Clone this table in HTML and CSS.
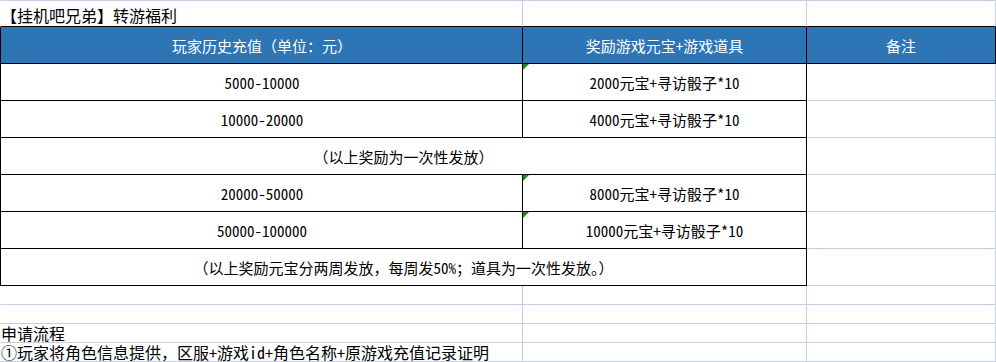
FILE: index.html
```html
<!DOCTYPE html>
<html lang="zh-CN">
<head>
<meta charset="utf-8">
<title>转游福利</title>
<link rel="stylesheet" href="styles.css">
</head>
<body>
<div class="sheet">
  <div class="c a r1 title">【挂机吧兄弟】转游福利</div>
  <div class="c b r1"></div>
  <div class="c cc r1"></div>

  <div class="c a t hd">玩家历史充值（单位：元）</div>
  <div class="c b t hd">奖励游戏元宝+游戏道具</div>
  <div class="c cc hd hdc">备注</div>

  <div class="c a t mid">5000-10000</div>
  <div class="c b t mid flag">2000元宝+寻访骰子*10</div>
  <div class="c cc"></div>

  <div class="c a t mid">10000-20000</div>
  <div class="c b t mid">4000元宝+寻访骰子*10</div>
  <div class="c cc"></div>

  <div class="c ab t mid">（以上奖励为一次性发放）</div>
  <div class="c cc"></div>

  <div class="c a t mid">20000-50000</div>
  <div class="c b t mid flag">8000元宝+寻访骰子*10</div>
  <div class="c cc"></div>

  <div class="c a t mid">50000-100000</div>
  <div class="c b t mid flag">10000元宝+寻访骰子*10</div>
  <div class="c cc"></div>

  <div class="c ab t mid">（以上奖励元宝分两周发放，每周发50%；道具为一次性发放。）</div>
  <div class="c cc"></div>

  <div class="c a"></div>
  <div class="c b"></div>
  <div class="c cc"></div>

  <div class="c a"></div>
  <div class="c b"></div>
  <div class="c cc"></div>

  <div class="c a low">申请流程</div>
  <div class="c b"></div>
  <div class="c cc"></div>

  <div class="c a low"><span class="num">①</span>玩家将角色信息提供，区服+游戏id+角色名称+原游戏充值记录证明</div>
  <div class="c b"></div>
  <div class="c cc"></div>
</div>
</body>
</html>
```
FILE: styles.css
```css
html, body {
  margin: 0;
  padding: 0;
  background: #ffffff;
}

body {
  font-family: "Noto Sans Mono CJK SC", "Noto Sans CJK SC", monospace;
  font-size: 15px;
  color: #000000;
  width: 996px;
  height: 362px;
  overflow: hidden;
}

.sheet {
  display: grid;
  grid-template-columns: 523px 284px 189px;
  grid-template-rows: 27px repeat(7, 37px) repeat(4, 19px);
}

.c {
  box-sizing: border-box;
  border-right: 1px solid #c6cde0;
  border-bottom: 1px solid #c6cde0;
  position: relative;
  white-space: nowrap;
  line-height: 17px;
  display: flex;
  align-items: flex-end;
}

.a {
  border-left: 1px solid transparent;
  padding-left: 1px;
}

.ab {
  grid-column: 1 / span 2;
  border-left: 1px solid transparent;
}

.r1 {
  border-top: 1px solid #c6cde0;
  border-bottom-color: #000000;
}

.title {
  font-size: 16px;
  padding-left: 0;
  padding-bottom: 2px;
}

.t {
  border-right-color: #000000;
  border-bottom-color: #000000;
}

.a.t, .ab.t {
  border-left-color: #000000;
}

.mid {
  justify-content: center;
  align-items: center;
  padding-top: 1px;
}

.hd {
  background: #2e75b6;
  color: #ffffff;
  justify-content: center;
  align-items: center;
}

.hdc {
  border-right-color: #000000;
  border-bottom-color: #000000;
}

.low {
  font-size: 16px;
  line-height: 16px;
  padding-left: 0;
  padding-bottom: 1px;
}

.num {
  display: inline-block;
  width: 16px;
  text-align: center;
}

.flag::before {
  content: "";
  position: absolute;
  top: 0;
  left: 0;
  width: 0;
  height: 0;
  border-top: 6px solid #1e8a1e;
  border-right: 6px solid transparent;
}
```
